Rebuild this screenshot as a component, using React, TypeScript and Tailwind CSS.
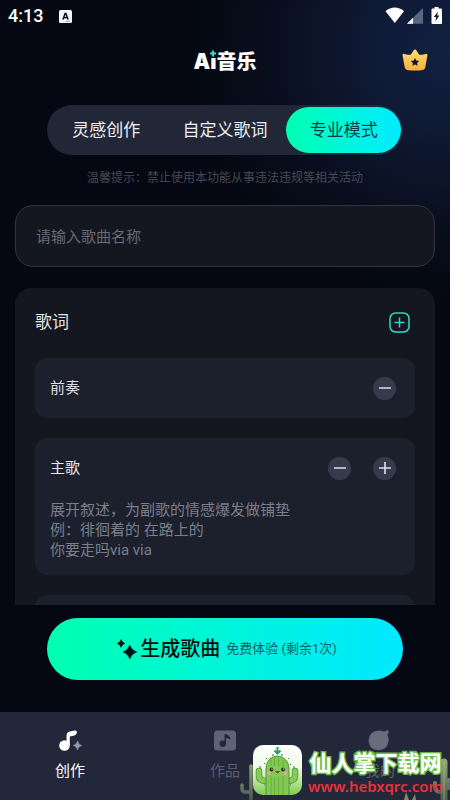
import { useState } from "react";

const MODES = ["灵感创作", "自定义歌词", "专业模式"];

function StatusBar() {
  return (
    <div className="flex h-8 shrink-0 items-center justify-between pr-2 pl-2 text-white">
      <div className="flex items-center gap-4">
        <span className="text-[18px] leading-5 font-medium">4:13</span>
        <svg className="h-[13px] w-[13px]" viewBox="0 0 13 13" aria-hidden="true">
          <rect width="13" height="13" rx="1.5" fill="#f4f5f7" />
          <path d="M3.2 9.5 5.6 2.8h1.8l2.4 6.7H8.1l-.4-1.3H5.3l-.4 1.3zM5.7 6.9h1.6l-.8-2.5z" fill="#0a0d16" />
          <path d="M7 11.2h4" stroke="#8b8f98" strokeWidth="0.8" />
        </svg>
      </div>
      <svg className="h-[18px] w-[57px]" viewBox="0 0 57 18" aria-hidden="true">
        <path d="M0.5 4.2C6-.6 13.5-.6 19 4.2L9.8 16z" fill="#fff" />
        <path d="M38 1v15.800H22z" fill="#5d6680" />
        <path d="M28 10.800v6h-6z" fill="#fff" />
        <path d="M49.500 0h4v1.500H56q1 0 1 1V16q0 1-1 1h-8.500q-1 0-1-1V2.500q0-1 1-1h2z" fill="#fff" />
        <path d="M53 4.500 48.800 10h2.400l-.8 4.500 4-6h-2.200z" fill="#111a33" />
      </svg>
    </div>
  );
}

function Header() {
  return (
    <header className="grid h-[58px] shrink-0 grid-cols-[1fr_auto_1fr] items-center px-[22px]">
      <h1 className="col-start-2 flex items-center pt-[2px] text-[20px] leading-6 font-black text-white">
        <span className="font-['Inter','Liberation_Sans',sans-serif] text-[21px] font-black">
          A
          <span className="relative inline-block">
            i
            <svg className="absolute -top-px left-1/2 h-[9px] w-[8px] -translate-x-1/2" viewBox="0 0 8 9" aria-hidden="true">
              <rect width="8" height="9" fill="#060a15" />
              <path d="M4 1.500v6M1 4.500h6" stroke="#2fe0cc" strokeWidth="2" />
            </svg>
          </span>
        </span>
        <span>音乐</span>
      </h1>
      <button type="button" aria-label="会员" className="justify-self-end pb-[2px]">
        <svg className="h-[22px] w-[26px]" viewBox="0 0 26 22" aria-hidden="true">
          <defs>
            <linearGradient id="crown" x1="0" y1="0" x2="0" y2="1">
              <stop offset="0" stopColor="#ffdc72" />
              <stop offset="1" stopColor="#f6b13c" />
            </linearGradient>
          </defs>
          <path
            d="M13 .6q.9 0 1.500 1l2.700 4.200q3.300 0 6.300-.9 2.200-.4 1.900 1.700L23.300 18.200q-.4 2.300-2.400 2.800-7.900 1.100-15.800 0-2-.5-2.400-2.800L.6 6.600Q.3 4.500 2.500 4.900 5.500 5.800 8.800 5.800l2.700-4.200q.6-1 1.500-1z"
            fill="url(#crown)"
          />
          <path d="m13 9 1.300 2.500 2.900.4-2.100 2 .5 2.900-2.600-1.400-2.600 1.400.5-2.900-2.100-2 2.900-.4z" fill="#11182c" />
        </svg>
      </button>
    </header>
  );
}

function ModeTabs() {
  const [mode, setMode] = useState(2);
  return (
    <div role="tablist" className="mx-[47px] mt-[15px] grid h-[50px] shrink-0 grid-cols-3 rounded-full bg-[#222738]">
      {MODES.map((label, i) => (
        <button
          key={label}
          type="button"
          role="tab"
          aria-selected={i === mode}
          onClick={() => setMode(i)}
          className={
            i === mode
              ? "m-[2px] rounded-full bg-linear-to-r from-[#00ffb0] to-[#00ebff] pt-[2px] text-[17px] whitespace-nowrap text-[#073b46]"
              : "m-[2px] rounded-full pt-[2px] text-[17px] whitespace-nowrap text-[#eceef3]"
          }
        >
          {label}
        </button>
      ))}
    </div>
  );
}

function RoundButton({ kind, label }: { kind: "minus" | "plus"; label: string }) {
  return (
    <button type="button" aria-label={label} className="flex size-[23px] items-center justify-center rounded-full bg-[#363b4b]">
      <svg className="size-3" viewBox="0 0 12 12" stroke="#dfe2e8" strokeWidth="1.600" aria-hidden="true">
        <path d={kind === "plus" ? "M0 6h12M6 0v12" : "M0 6h12"} />
      </svg>
    </button>
  );
}

function LyricsPanel() {
  return (
    <section className="mx-[15px] mt-[21px] flex min-h-0 flex-1 flex-col overflow-hidden rounded-t-2xl bg-[#14171f] px-5">
      <div className="flex h-[70px] shrink-0 items-center justify-between pr-[5px]">
        <h2 className="text-[17px] text-[#e4e6ea]">歌词</h2>
        <button type="button" aria-label="添加段落" className="pb-[2px]">
          <svg className="size-[21px]" viewBox="0 0 21 21" fill="none" stroke="url(#add)" strokeWidth="1.500" aria-hidden="true">
            <defs>
              <linearGradient id="add" gradientUnits="userSpaceOnUse" x1="0" y1="0" x2="21" y2="21">
                <stop offset="0" stopColor="#20dca4" />
                <stop offset="1" stopColor="#2adfe6" />
              </linearGradient>
            </defs>
            <rect x="1" y="1" width="19" height="19" rx="5.500" />
            <path d="M5.500 10.500h10M10.500 5.500v10" />
          </svg>
        </button>
      </div>
      <div className="flex flex-col gap-5">
        <div className="flex h-[60px] items-center justify-between rounded-xl bg-[#1c202d] pr-[19px] pl-[15px]">
          <h3 className="text-[15px] text-[#d9dbe1]">前奏</h3>
          <RoundButton kind="minus" label="删除前奏" />
        </div>
        <div className="rounded-xl bg-[#1c202d] pb-[15px]">
          <div className="flex h-[60px] items-center justify-between pr-[19px] pl-[15px]">
            <h3 className="text-[15px] text-[#e4e6ea]">主歌</h3>
            <div className="flex gap-[22px]">
              <RoundButton kind="minus" label="删除主歌" />
              <RoundButton kind="plus" label="添加主歌" />
            </div>
          </div>
          <textarea
            aria-label="主歌歌词"
            rows={3}
            placeholder={"展开叙述，为副歌的情感爆发做铺垫\n例：徘徊着的 在路上的\n你要走吗via via"}
            className="block w-full resize-none overflow-hidden bg-transparent px-[15px] pt-[2px] text-[15px] leading-5 outline-none placeholder:text-[#7b7f8a]"
          />
        </div>
        <div className="h-[60px] rounded-xl bg-[#1c202d]" />
      </div>
    </section>
  );
}

function BottomNav() {
  return (
    <nav className="flex h-[88px] shrink-0 items-start justify-between bg-[#22273a] px-10 pt-4 text-[15px]">
      <a href="#create" aria-current="page" className="flex w-[60px] flex-col items-center gap-[9px] text-white">
        <svg className="h-6 w-6" viewBox="0 0 24 24" aria-hidden="true">
          <circle cx="6.500" cy="17.500" r="5.300" fill="#fff" />
          <path d="M8.500 17.500V8Q8.500 4.500 12 3.600l4.500-1.100q2.400-.5 2.400 1.700 0 2.600-2.300 3.200l-4.800 1.200v9z" fill="#fff" />
          <path d="M19.500 13q.8 3.700 4.300 4.500-3.500.8-4.300 4.500-.8-3.700-4.300-4.500 3.500-.8 4.300-4.500z" fill="#9499a6" stroke="#9499a6" strokeWidth=".6" />
        </svg>
        <span className="leading-5">创作</span>
      </a>
      <a href="#works" className="flex w-[60px] flex-col items-center gap-[9px] text-[#5b6070]">
        <svg className="h-6 w-6" viewBox="0 0 24 24" aria-hidden="true">
          <rect x="1" y="2.500" width="22" height="20" rx="3.500" fill="#5f6475" />
          <circle cx="9.800" cy="15.800" r="3.200" fill="#22273a" />
          <path d="M11.500 16V6q2 0 3.500 1.300 2.500 1.300 2.500 4.200-2-1.500-4.500-1.500v6z" fill="#22273a" />
        </svg>
        <span className="leading-5">作品</span>
      </a>
      <a href="#mine" className="flex w-[60px] flex-col items-center gap-[9px] text-[#5b6070]">
        <svg className="h-6 w-6" viewBox="0 0 24 24" aria-hidden="true">
          <path d="M10.500 2.600q3.300-.2 5.500 1.200 1.500-1.300 3.200-1.500 2 .1 1.500 2.200-.5 1.500-1.300 2.200 1.400 2.800 1.200 6-1 9-10.100 9.600Q1.200 21.800.5 12.500 1.100 3.400 10.500 2.600z" fill="#676c7e" />
        </svg>
        <span className="leading-5">我的</span>
      </a>
    </nav>
  );
}

function SiteBadge() {
  return (
    <div className="pointer-events-none absolute right-0 bottom-0 h-[60px] w-[210px]">
      <svg className="absolute inset-0 h-full w-full" viewBox="0 0 210 60" aria-hidden="true">
        <defs>
          <linearGradient id="tile" x1="0" y1="0" x2="0" y2="1">
            <stop offset="0" stopColor="#fff" />
            <stop offset="0.450" stopColor="#effae8" />
            <stop offset="1" stopColor="#7fcc4c" />
          </linearGradient>
          <linearGradient id="desert" gradientUnits="userSpaceOnUse" x1="0" y1="20" x2="0" y2="60">
            <stop offset="0" stopColor="#8fa878" />
            <stop offset="1" stopColor="#4d5b52" />
          </linearGradient>
          <clipPath id="tileClip">
            <rect x="13" y="5" width="49" height="50" rx="10" />
          </clipPath>
        </defs>
        <g fill="none" stroke="url(#desert)" strokeLinecap="round" strokeLinejoin="round">
          <path d="M11 62V26M10 52H5q-3 0-3-4v-3" strokeWidth="3.500" />
          <path d="M204 62V22" strokeWidth="7" />
          <path d="M202 52h-2q-5 0-5-6v-3M206 48h3v-8" strokeWidth="4" />
        </g>
        <path d="M164 60l2-8 3 8M172 60l3-6 1 6" fill="#8a8a62" />
        <path d="M204 61V22" stroke="#b9c48f" strokeWidth="1" opacity="0.600" />
        <rect x="13" y="5" width="49" height="50" rx="10" fill="url(#tile)" />
        <g clipPath="url(#tileClip)">
          <g fill="none" stroke="#4d9638" strokeWidth="6.500" strokeLinecap="round" strokeLinejoin="round">
            <path d="M19 31v5q0 5 8 5M55 31v5q0 5-8 5" />
          </g>
          <g fill="none" stroke="#85cb54" strokeWidth="5" strokeLinecap="round" strokeLinejoin="round">
            <path d="M19 31v5q0 5 8 5M55 31v5q0 5-8 5" />
          </g>
          <path d="M26 56V28q1-11 11-12 11 1 12 12v28z" fill="#82c951" stroke="#4d9638" strokeWidth="1" />
          <path d="M31 20v6M31 36v19M34.500 18v8M34.500 37v18M38.500 18v8M38.500 37v18M43 20v6M43 36v19" stroke="#5faa3e" strokeWidth=".8" />
          <path d="M25 24l-1-1M27 19l-1-1M48 19l1-1M50 25l1-1M33 16v-2M42 16v-2M25 45h-1M50 45h1M20 28v-2M54 28v-2" stroke="#3f7d30" strokeWidth="1" />
        </g>
        <circle cx="31.500" cy="29.500" r="1.900" fill="#302f2c" />
        <circle cx="43" cy="29.500" r="1.900" fill="#302f2c" />
        <circle cx="32" cy="29" r=".6" fill="#fff" />
        <circle cx="43.500" cy="29" r=".6" fill="#fff" />
        <circle cx="29" cy="33" r="1.700" fill="#f0a3a0" />
        <circle cx="45.500" cy="33" r="1.700" fill="#f0a3a0" />
        <path d="M35.500 31.500q2 3 4 0z" fill="#b63c3c" stroke="#673629" strokeWidth=".6" />
        <path d="M37.500 7v6M34.500 10.500l3 3 3-3" fill="none" stroke="#22a36b" strokeWidth="2" />
      </svg>
      <div className="absolute top-[9px] left-[68px] flex flex-col items-center whitespace-nowrap">
        <span className="text-[22px] leading-[30px] font-bold text-white [-webkit-text-stroke:3px_#62b23a] [paint-order:stroke_fill] [text-shadow:0_0_2px_#9be27a]">
          仙人掌下载网
        </span>
        <span className="font-['Noto_Sans','Open_Sans',sans-serif] text-[15px] leading-[14px] font-semibold text-[#e8323a]">www.hebxqrc.com</span>
      </div>
    </div>
  );
}

export default function App() {
  return (
    <div className="relative flex h-screen min-h-[640px] flex-col overflow-hidden bg-[#050812] bg-[radial-gradient(ellipse_260px_250px_at_100%_50px,#122041_0%,#0f1a35_30%,#080d1b_75%,transparent_100%)] font-['Roboto','Noto_Sans_CJK_SC',sans-serif]">
      <StatusBar />
      <Header />
      <main className="flex min-h-0 flex-1 flex-col">
        <ModeTabs />
        <p className="mt-[13px] shrink-0 text-center text-[12px] leading-5 text-[#454954]">温馨提示：禁止使用本功能从事违法违规等相关活动</p>
        <input
          type="text"
          aria-label="歌曲名称"
          placeholder="请输入歌曲名称"
          className="mx-[15px] mt-[17px] h-[62px] shrink-0 rounded-[18px] border border-[#30343f] bg-[#14171f] px-5 pt-[2px] text-[15px] text-white outline-none placeholder:text-[#686b74]"
        />
        <LyricsPanel />
        <button
          type="button"
          className="mx-[47px] mt-[13px] mb-8 flex h-[62px] shrink-0 items-center justify-center rounded-full bg-linear-to-r from-[#00ffb0] to-[#00e8ff] pl-1 whitespace-nowrap text-[#04120f]"
        >
          <svg className="mr-[3px] size-5" viewBox="0 0 20 20" fill="currentColor" stroke="currentColor" strokeWidth=".6" strokeLinejoin="round" aria-hidden="true">
            <path d="M12.800 6q1.700 5.300 6.900 7-5.200 1.700-6.900 7-1.700-5.300-6.900-7 5.200-1.700 6.900-7z" />
            <path d="M4 .5q1 3 3.700 3.900Q5 5.300 4 8.300 3 5.300.3 4.400 3 3.500 4 .5z" />
          </svg>
          <span className="text-[20px] font-medium">生成歌曲</span>
          <span className="ml-[6px] text-[13px] text-[#0a5f68]">免费体验 (剩余1次)</span>
        </button>
      </main>
      <BottomNav />
      <SiteBadge />
    </div>
  );
}
